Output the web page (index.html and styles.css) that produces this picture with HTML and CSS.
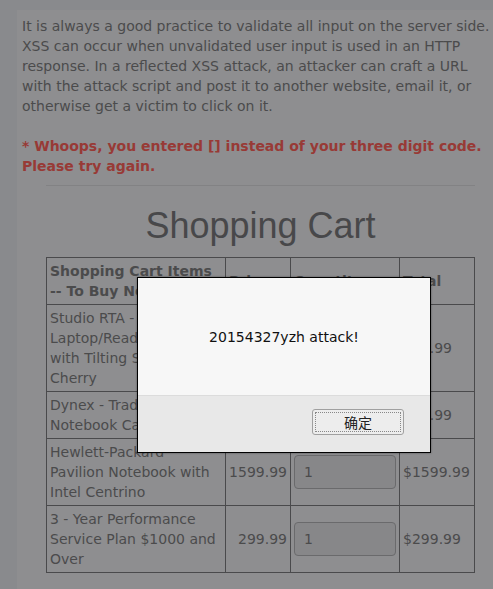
FILE: index.html
```html
<!DOCTYPE html>
<html>
<head>
    <meta name="viewport" content="width=device-width, initial-scale=1.0">
    <link rel="stylesheet" href="styles.css">
</head>
<body>
    <div class="lesson">
        <p class="intro">It is always a good practice to validate all input on the server side. XSS can occur when unvalidated user input is used in an HTTP response. In a reflected XSS attack, an attacker can craft a URL with the attack script and post it to another website, email it, or otherwise get a victim to click on it.</p>
        <p class="error">* Whoops, you entered [] instead of your three digit code. Please try again.</p>
        <div class="cart">
            <hr class="rule">
            <h1 class="cart-title">Shopping Cart</h1>
            <table class="cart-table">
                <tr>
                    <th class="col-item">Shopping Cart Items -- To Buy Now</th>
                    <th class="col-price">Price</th>
                    <th class="col-qty">Quantity</th>
                    <th class="col-total">Total</th>
                </tr>
                <tr>
                    <td>Studio RTA - Laptop/Reading Cart with Tilting Surface - Cherry</td>
                    <td class="price">69.99</td>
                    <td><input class="qty" type="text" value="1"></td>
                    <td>$69.99</td>
                </tr>
                <tr>
                    <td>Dynex - Traditional Notebook Case</td>
                    <td class="price">27.99</td>
                    <td><input class="qty" type="text" value="1"></td>
                    <td>$27.99</td>
                </tr>
                <tr>
                    <td>Hewlett-Packard Pavilion Notebook with Intel Centrino</td>
                    <td class="price">1599.99</td>
                    <td><input class="qty" type="text" value="1"></td>
                    <td>$1599.99</td>
                </tr>
                <tr>
                    <td>3 - Year Performance Service Plan $1000 and Over</td>
                    <td class="price">299.99</td>
                    <td><input class="qty" type="text" value="1"></td>
                    <td>$299.99</td>
                </tr>
            </table>
        </div>
    </div>

    <div class="alert">
        <div class="alert-body">20154327yzh attack!</div>
        <div class="alert-footer">
            <button class="alert-btn"><span class="alert-btn-label">确定</span></button>
        </div>
    </div>
</body>
</html>
```

FILE: styles.css
```css
html {
    overflow: hidden;
}
body {
    margin: 0;
    background: #898a8d;
    font-family: "DejaVu Sans", sans-serif;
    font-size: 14px;
    color: #4b4b4c;
    height: 589px;
    overflow: hidden;
}
.lesson {
    margin: 10px 0 0 17px;
    background: #8e8e90;
    padding: 6px 0 0 5px;
    height: 573px;
}
.intro {
    margin: 0;
    line-height: 20px;
}
.error {
    margin: 20px 0 0;
    line-height: 20px;
    color: #983a36;
    font-weight: bold;
}
.cart {
    margin: 0 18px 0 24px;
}
.rule {
    margin: 9px 0 0;
    border: none;
    border-top: 1px solid #828284;
    height: 0;
}
.cart-title {
    font-family: "Liberation Sans", Arial, sans-serif;
    font-weight: normal;
    font-size: 36px;
    color: #48484a;
    text-align: center;
    margin: 18px 0 0;
    line-height: 44px;
}
.cart-table {
    margin-top: 9px;
    border-collapse: collapse;
    width: 429px;
    font-size: 14px;
}
.cart-table th, .cart-table td {
    border: 1px solid #4a4a4c;
    padding: 3px 3px;
    line-height: 20px;
    text-align: left;
    vertical-align: middle;
}
.cart-table th {
    font-weight: bold;
}
.col-item { width: 173px; }
.col-price { width: 58px; }
.col-qty { width: 102px; }
.col-total { width: 68px; }
.cart-table td.price {
    text-align: right;
}
.qty {
    box-sizing: border-box;
    width: 102px;
    height: 34px;
    margin: 0;
    border: 1px solid #6a6a6c;
    border-radius: 4px;
    background: #878789;
    color: #4b4b4c;
    font-family: "DejaVu Sans", sans-serif;
    font-size: 14px;
    padding: 0 9px;
}
.alert {
    position: absolute;
    left: 137px;
    top: 277px;
    width: 292px;
    border: 1px solid #000;
    background: #f7f7f7;
    box-shadow: 0 0 2px rgba(0, 0, 0, 0.4);
}
.alert-body {
    height: 117px;
    display: flex;
    align-items: center;
    justify-content: center;
    color: #111;
    font-size: 14px;
    border-bottom: 1px solid #dcdcdc;
}
.alert-footer {
    height: 56px;
    background: #e8e8e8;
    display: flex;
    justify-content: flex-end;
    align-items: flex-start;
    padding-right: 26px;
}
.alert-btn {
    margin-top: 13px;
    width: 92px;
    height: 26px;
    border: 1px solid #a0a0a0;
    border-radius: 3px;
    background: #ededed;
    padding: 2px;
    font-family: "Noto Sans CJK SC", sans-serif;
    font-size: 14px;
    color: #222;
}
.alert-btn-label {
    display: flex;
    align-items: center;
    justify-content: center;
    height: 100%;
    border: 1px dotted #888;
    box-sizing: border-box;
}
```
